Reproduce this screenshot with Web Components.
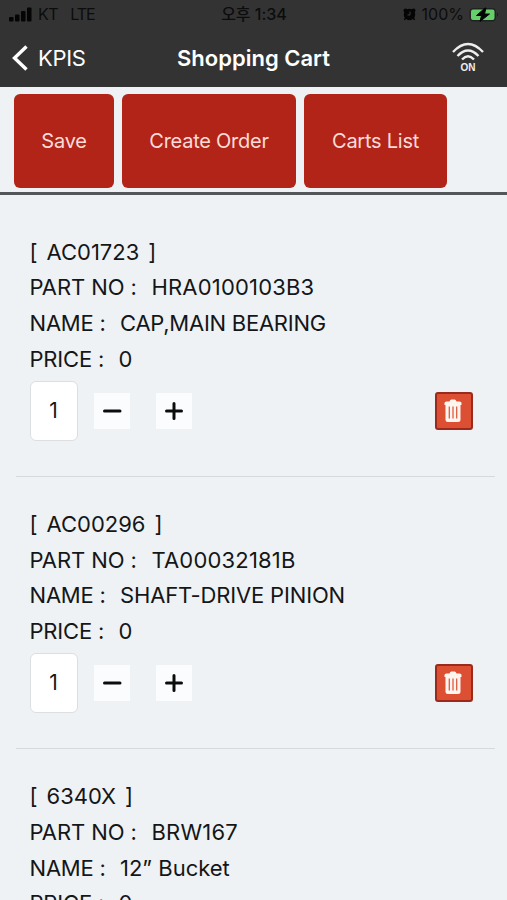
<!DOCTYPE html>
<html lang="ko">
<head>
<meta charset="utf-8">
<title>Shopping Cart</title>
<style>
  body {
    margin: 0;
    height: 900px;
    overflow: hidden;
    background: #eef2f5;
    color: #151617;
    font-family: Inter, "Noto Sans CJK KR", sans-serif;
    font-feature-settings: "calt" 0;
  }
</style>
</head>
<body>
<cart-app></cart-app>

<script>
class StatusBar extends HTMLElement {
  constructor() {
    super();
    this.attachShadow({ mode: "open" });
  }

  connectedCallback() {
    this.shadowRoot.innerHTML = `
      <style>
        :host {
          display: grid;
          grid-template-columns: 1fr auto 1fr;
          align-items: center;
          height: 28px;
          padding: 0 8px 0 9px;
          color: #0c0c0c;
          font-size: 16px;
          line-height: 29px;
        }
        div { display: flex; align-items: center; }
        .net { margin-left: 12px; letter-spacing: -1px; }
        .kt { margin-left: 6px; letter-spacing: -.4px; }
        .time { font-weight: 500; }
        .right { justify-content: flex-end; }
        .alarm { margin-right: 6px; }
        .battery { margin-left: 5px; }
      </style>
      <div>
        <svg width="23" height="15" viewBox="0 0 23 15" fill="#050505">
          <rect x="0" y="10" width="4.5" height="4.5" rx="1"/>
          <rect x="6" y="7.500" width="4.5" height="7" rx="1"/>
          <rect x="12" y="4" width="4.5" height="10.500" rx="1"/>
          <rect x="18" y="0.5" width="4.5" height="14" rx="1"/>
        </svg>
        <span class="kt">KT</span><span class="net">LTE</span>
      </div>
      <div class="time">오후 1:34</div>
      <div class="right">
        <svg class="alarm" width="13" height="13" viewBox="0 0 13 13" fill="#050505">
          <circle cx="6.500" cy="6.500" r="5.700"/>
          <circle cx="2.500" cy="2.500" r="2"/>
          <circle cx="10.500" cy="2.500" r="2"/>
          <path d="M3 9 1.500 12M10 9l1.500 3" stroke="#050505" stroke-width="1.500"/>
          <path d="M7 3.500V7H4.500" fill="none" stroke="#3c3c3c"/>
        </svg>
        <span>100%</span>
        <svg class="battery" width="30" height="16" viewBox="0 0 30 16">
          <rect x=".5" y="1" width="26.500" height="13.500" rx="4" fill="#1f2420"/>
          <rect x="2" y="2.500" width="23.500" height="10.500" rx="2" fill="#66cf6c"/>
          <path d="M28 5.500q2 2.200 0 4.500z" fill="#181818"/>
          <path d="M16 1 7.500 8.500h5L11 14.500l9.500-7.500h-5L17 1z" fill="#050505" stroke="#050505"/>
        </svg>
      </div>`;
  }
}
customElements.define("status-bar", StatusBar);

class NavBar extends HTMLElement {
  constructor() {
    super();
    this.attachShadow({ mode: "open" });
  }

  connectedCallback() {
    this.shadowRoot.innerHTML = `
      <style>
        :host {
          display: grid;
          grid-template-columns: 1fr auto 1fr;
          align-items: center;
          height: 59px;
          padding: 0 23px 0 12px;
          color: #fff;
        }
        .back { display: flex; align-items: center; gap: 10px; font-size: 22px; letter-spacing: -.3px; line-height: 28px; }
        .title { padding-left: 11px; font-size: 22px; font-weight: 600; }
        .wifi { justify-self: end; margin-top: -1px; }
      </style>
      <div class="back">
        <svg width="16" height="26" viewBox="0 0 16 26"><path d="M14.500 1.500 2.500 13l12 11.500" fill="none" stroke="#fff" stroke-width="3.400"/></svg>
        <span>KPIS</span>
      </div>
      <div class="title"><slot></slot></div>
      <svg class="wifi" width="32" height="32" viewBox="0 0 32 32">
        <g fill="none" stroke="#eee" stroke-width="2.400">
          <path d="M1 11q15-16 30 0"/>
          <path d="M5.500 15q10.500-11 21 0"/>
          <path d="M10 18.500q6-6.500 12 0"/>
        </g>
        <text x="16" y="30" text-anchor="middle" font-family="Liberation Sans, sans-serif" font-size="11.500" font-weight="700" fill="#eee" textLength="15" lengthAdjust="spacingAndGlyphs">ON</text>
      </svg>`;
  }
}
customElements.define("nav-bar", NavBar);

class ActionButton extends HTMLElement {
  constructor() {
    super();
    this.attachShadow({ mode: "open" });
  }

  connectedCallback() {
    this.shadowRoot.innerHTML = `
      <style>
        :host {
          display: flex;
          align-items: center;
          justify-content: center;
          box-sizing: border-box;
          height: 94px;
          border-radius: 6px;
          background: #b32418;
          color: #fbdcd8;
          font-size: 20px;
          letter-spacing: -.25px;
          white-space: nowrap;
        }
      </style>
      <slot></slot>`;
  }
}
customElements.define("action-button", ActionButton);

class CartItem extends HTMLElement {
  constructor() {
    super();
    this.attachShadow({ mode: "open" });
  }

  connectedCallback() {
    this.shadowRoot.innerHTML = `
      <style>
        :host {
          display: block;
          box-sizing: border-box;
          height: 272.300px;
          margin: 0 12px 0 16px;
          padding: 30px 22px 0 13.500px;
          border-bottom: 1.500px solid #d5d9dc;
        }
        .line { height: 35.700px; line-height: 35.700px; font-size: 22px; white-space: pre; display: flex; }
        .code { gap: 9px; }
        .label { letter-spacing: -.2px; }
        .part { width: 122px; letter-spacing: -.1px; }
        .name { width: 90.500px; }
        .price { width: 89px; }
        .part + span { letter-spacing: .18px; }
        .name + span { letter-spacing: var(--name-spacing, 0); }
        .controls { display: flex; align-items: center; margin-top: 3.500px; }
        .qty {
          box-sizing: border-box;
          width: 48px;
          height: 60px;
          border: 1px solid #dcdfe2;
          border-radius: 6px;
          background: #fff;
          font-size: 21px;
          line-height: 58px;
          text-align: center;
        }
        .step { display: flex; width: 36px; height: 36px; background: #fafcfd; }
        .minus { margin-left: 16px; }
        .plus { margin-left: 26px; }
        .trash {
          display: flex;
          align-items: center;
          justify-content: center;
          box-sizing: border-box;
          width: 38px;
          height: 38px;
          margin-left: auto;
          border: 2px solid #9c2a1c;
          border-radius: 3px;
          background: #dc4f32;
        }
      </style>
      <div class="line code"><span>[</span><span class="id">${this.getAttribute("code")}</span><span>]</span></div>
      <div class="line"><span class="label part">PART NO :</span><span>${this.getAttribute("part")}</span></div>
      <div class="line"><span class="label name">NAME :</span><span>${this.getAttribute("name")}</span></div>
      <div class="line"><span class="label price">PRICE :</span><span>0</span></div>
      <div class="controls">
        <div class="qty">1</div>
        <div class="step minus"><svg width="36" height="36"><path d="M10.500 18h15.500" stroke="#0c0c0c" stroke-width="3" stroke-linecap="round"/></svg></div>
        <div class="step plus"><svg width="36" height="36"><path d="M10.500 18h15M18 10.500v15" stroke="#0c0c0c" stroke-width="3" stroke-linecap="round"/></svg></div>
        <div class="trash">
          <svg width="20" height="26" viewBox="0.5 0 20 26">
            <path d="M1 7V5q0-1.500 2-1.500h3q.5-2 2-2h3q1.500 0 2 2h3q2 0 2 1.500v2z" fill="#fff5ef"/>
            <path d="M2 6.500h15v15q0 2.500-2.500 2.500h-10q-2.500 0-2.500-2.500z" fill="#fff5ef"/>
            <path d="M5.800 8.500v12M9.500 8.500v12M13.200 8.500v12" stroke="#dc5c40" stroke-width="1.300"/>
          </svg>
        </div>
      </div>`;
  }
}
customElements.define("cart-item", CartItem);

class CartApp extends HTMLElement {
  constructor() {
    super();
    this.attachShadow({ mode: "open" });
  }

  connectedCallback() {
    this.shadowRoot.innerHTML = `
      <style>
        :host { display: block; height: 900px; overflow: hidden; }
        header { background: #333; }
        .toolbar {
          display: flex;
          gap: 8px;
          box-sizing: border-box;
          height: 108px;
          padding: 7px 14px 0;
          border-bottom: 3px solid #54575a;
        }
        .save { width: 100px; }
        .create { width: 174px; }
        .list { width: 143px; }
        main { padding-top: 9.700px; }
        cart-item:nth-child(1) { --name-spacing: -.25px; }
        cart-item:nth-child(2) { --name-spacing: -.15px; }
      </style>
      <header>
        <status-bar></status-bar>
        <nav-bar>Shopping Cart</nav-bar>
      </header>
      <div class="toolbar">
        <action-button class="save">Save</action-button>
        <action-button class="create">Create Order</action-button>
        <action-button class="list">Carts List</action-button>
      </div>
      <main>
        <cart-item code="AC01723" part="HRA0100103B3" name="CAP,MAIN BEARING"></cart-item>
        <cart-item code="AC00296" part="TA00032181B" name="SHAFT-DRIVE PINION"></cart-item>
        <cart-item code="6340X" part="BRW167" name="12” Bucket"></cart-item>
      </main>`;
  }
}
customElements.define("cart-app", CartApp);
</script>
</body>
</html>
